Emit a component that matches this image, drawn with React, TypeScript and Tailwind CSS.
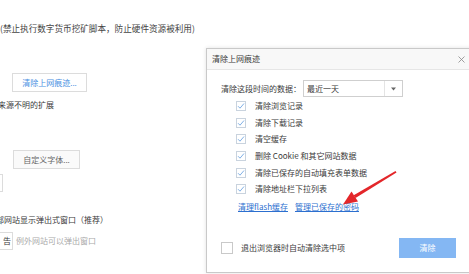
import React from "react";

const font = { fontFamily: '"Noto Sans CJK SC", "Noto Sans", sans-serif' };

function Check({ checked }: { checked: boolean }) {
  return (
    <div className="w-[10px] h-[10px] border border-[#c9d3de] bg-white flex items-center justify-center shrink-0">
      {checked && (
        <svg width="8" height="8" viewBox="0 0 8 8">
          <polyline points="1,4.2 3,6.2 7,1.5" fill="none" stroke="#7fb0e6" strokeWidth="1" />
        </svg>
      )}
    </div>
  );
}

export default function App() {
  const items = [
    "清除浏览记录",
    "清除下载记录",
    "清空缓存",
    "删除 Cookie 和其它网站数据",
    "清除已保存的自动填充表单数据",
    "清除地址栏下拉列表",
  ];
  return (
    <div className="relative w-[469px] h-[274px] overflow-hidden bg-white text-[#3a3a3a]" style={font}>
      {/* page */}
      <div className="flex flex-col items-start text-[8px]">
        <div className="mt-[22px] h-[12px] leading-[12px] text-[8.6px] text-[#444] whitespace-nowrap">
          (禁止执行数字货币挖矿脚本，防止硬件资源被利用)
        </div>
        <div className="mt-[39px] ml-[12px] w-[75px] h-[19px] border border-[#dcdcdc] bg-white flex items-center justify-center text-[#4a90e2] leading-none">
          清除上网痕迹...
        </div>
        <div className="mt-[7px] ml-[-2px] h-[12px] leading-[12px] whitespace-nowrap">来源不明的扩展</div>
        <div className="mt-[39px] ml-[13px] w-[67px] h-[19px] border border-[#dcdcdc] bg-[#fafafa] flex items-center justify-center text-[#666] leading-none">
          自定义字体...
        </div>
        <div className="mt-[5px] ml-[-2px] w-[5px] h-[18px] border border-[#dcdcdc]" />
        <div className="mt-[22px] ml-[-4px] h-[12px] leading-[12px] whitespace-nowrap">部网站显示弹出式窗口（推荐）</div>
        <div className="mt-[6px] flex items-center">
          <div className="ml-[-6px] w-[19px] h-[18px] border border-[#dcdcdc] flex items-center justify-end pr-[1px] leading-none">告</div>
          <div className="ml-[3px] text-[#aaa] whitespace-nowrap leading-none">例外网站可以弹出窗口</div>
        </div>
      </div>

      {/* dialog */}
      <div className="absolute left-[206px] top-[48px] w-[268px] h-[225px] border border-[#c9c9c9] bg-white shadow-[0_0_4px_rgba(0,0,0,0.12)] flex flex-col text-[8px]">
        <div className="h-[21px] bg-[#f8f8f8] border-b border-[#e6e6e6] flex items-center justify-between pl-[5px] pr-[8px] shrink-0">
          <span className="leading-none">清除上网痕迹</span>
          <svg width="7" height="7" viewBox="0 0 7 7">
            <path d="M0.5 0.5 L6.5 6.5 M6.5 0.5 L0.5 6.5" stroke="#888" strokeWidth="0.8" />
          </svg>
        </div>
        <div className="flex items-center mt-[10px] pl-[14px]">
          <span className="w-[82px] leading-none whitespace-nowrap">清除这段时间的数据：</span>
          <div className="w-[100px] h-[17px] border border-[#cfcfcf] flex items-stretch">
            <div className="flex-1 flex items-center pl-[3px] leading-none">最近一天</div>
            <div className="w-[18px] border-l border-[#e4e4e4] flex items-center justify-center">
              <svg width="5" height="4" viewBox="0 0 5 4">
                <polygon points="0,0.5 5,0.5 2.5,3.5" fill="#666" />
              </svg>
            </div>
          </div>
        </div>
        <div className="flex flex-col pl-[29px] mt-[1px]">
          {items.map((t) => (
            <div key={t} className="h-[16.6px] flex items-center">
              <Check checked />
              <span className="ml-[9px] leading-none whitespace-nowrap">{t}</span>
            </div>
          ))}
        </div>
        <div className="flex items-center gap-[7px] pl-[31px] mt-[2px] h-[14px] text-[#2c6fcf]">
          <span className="underline leading-none">清理flash缓存</span>
          <span className="underline leading-none">管理已保存的密码</span>
        </div>
        <div className="mt-[24px] flex items-center pl-[14px]">
          <div className="w-[12px] h-[12px] border border-[#c9c9c9] bg-white" />
          <span className="ml-[8px] leading-none whitespace-nowrap">退出浏览器时自动清除选中项</span>
          <div className="ml-[54px] w-[57px] h-[20px] bg-[#84b7f3] text-white flex items-center justify-center leading-none">
            清除
          </div>
        </div>
      </div>

      {/* red arrow */}
      <svg className="absolute left-0 top-0" width="469" height="274" viewBox="0 0 469 274">
        <polygon points="395.5,171 396.5,172.5 355.5,198 353.7,195.2" fill="#e3262a" />
        <polygon points="343,204.5 351.5,191.5 358,201.5" fill="#e3262a" />
      </svg>
    </div>
  );
}
